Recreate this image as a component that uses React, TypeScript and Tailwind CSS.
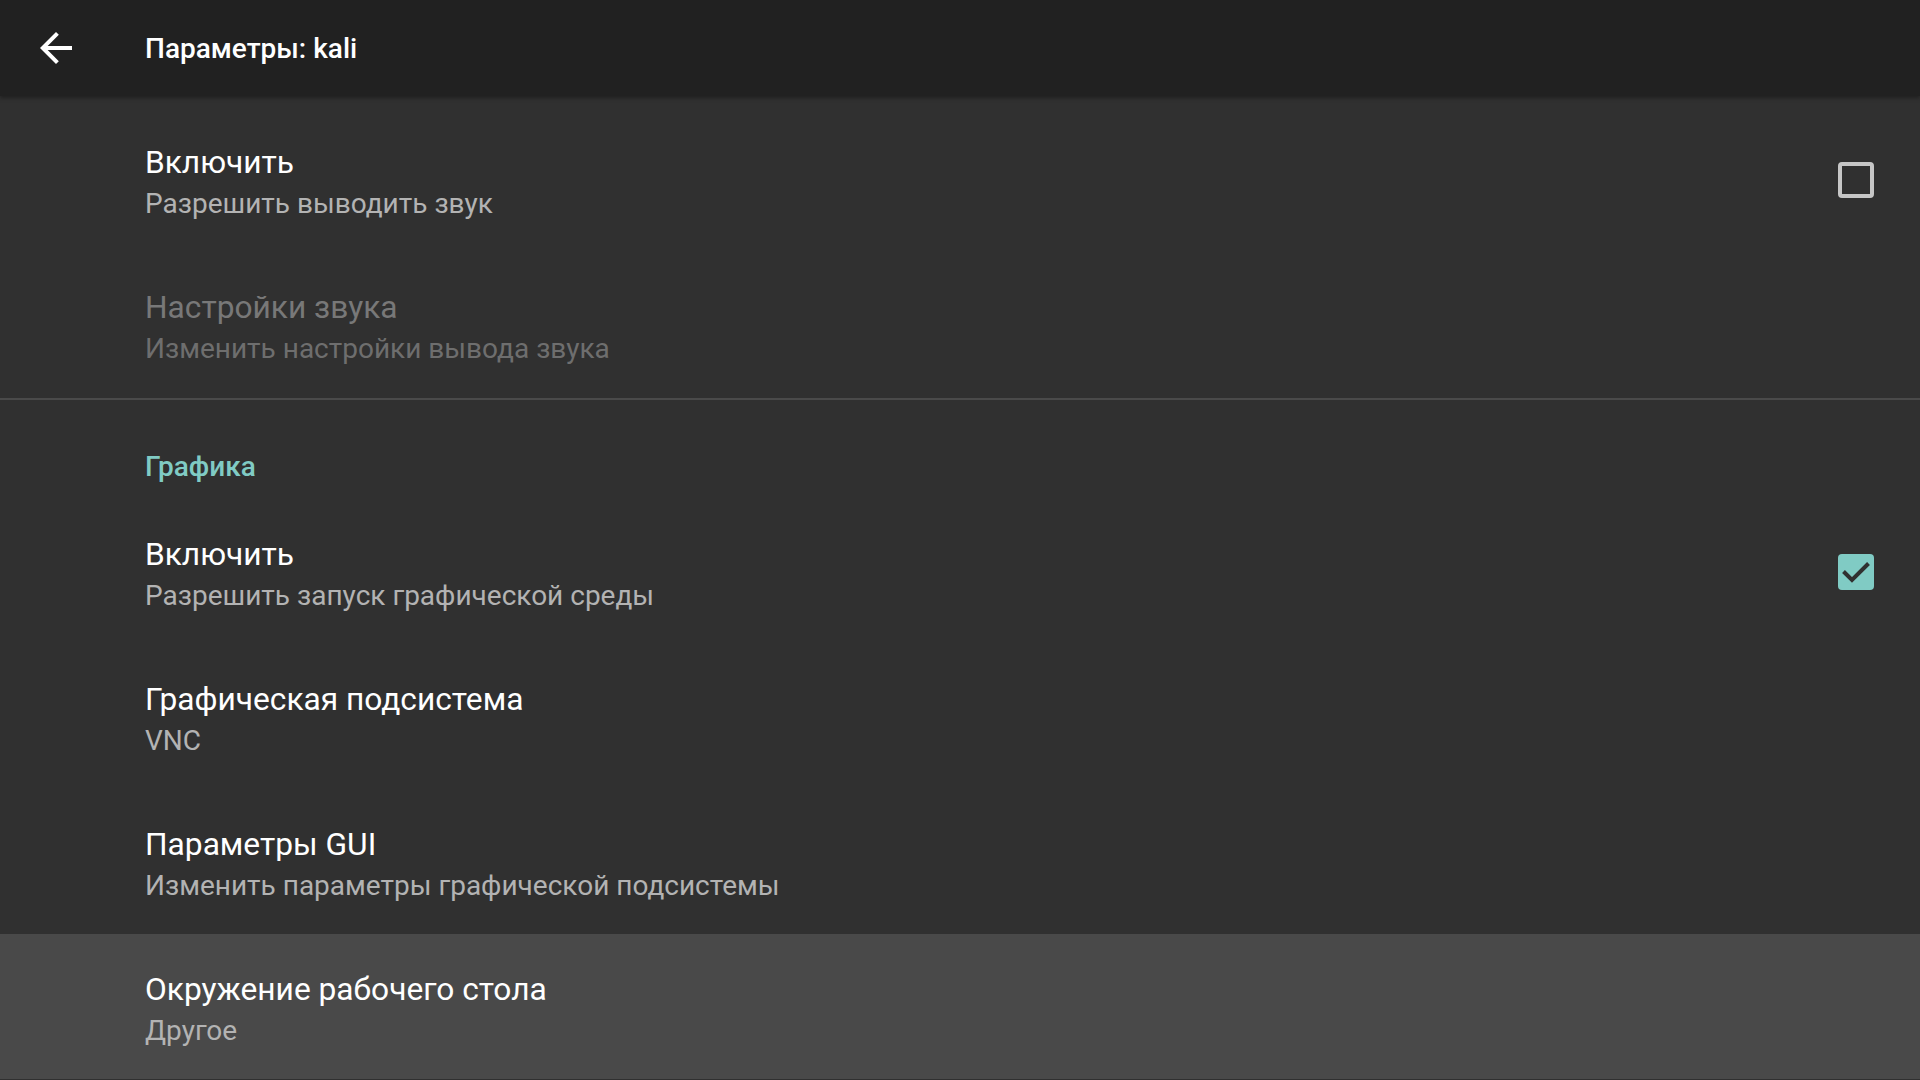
import React from "react";

type Pref = {
  title: string;
  summary: string;
  disabled?: boolean;
  checkbox?: "on" | "off";
  focused?: boolean;
};

function BackArrow() {
  return (
    <svg width="48" height="48" viewBox="0 0 24 24" fill="#ffffff">
      <path d="M20 11H7.83l5.59-5.59L12 4l-8 8 8 8 1.41-1.41L7.83 13H20v-2z" />
    </svg>
  );
}

function Checkbox({ checked }: { checked: boolean }) {
  if (checked) {
    return (
      <div className="w-[36px] h-[36px] rounded-[4px] bg-[#80cbc4] flex items-center justify-center">
        <svg width="36" height="36" viewBox="0 0 36 36" fill="none">
          <polyline
            points="5.5,17.5 14,26 30.5,9.5"
            stroke="#303030"
            strokeWidth="4"
            strokeLinecap="butt"
            strokeLinejoin="miter"
          />
        </svg>
      </div>
    );
  }
  return <div className="w-[36px] h-[36px] rounded-[4px] border-[4px] border-[#c6c6c6]" />;
}

function PrefRow({ p }: { p: Pref }) {
  return (
    <div
      className={`h-[145px] flex items-start pl-[145px] pr-[46px] ${
        p.focused ? "bg-[#494949]" : ""
      }`}
    >
      <div className="flex-1 pt-[36px]">
        <div
          className={`text-[31.7px] leading-[40px] ${
            p.disabled ? "text-[#787878]" : "text-white"
          }`}
        >
          {p.title}
        </div>
        <div
          className={`mt-[3px] text-[28px] leading-[36px] ${
            p.disabled ? "text-[#6e6e6e]" : "text-[#b3b3b3]"
          }`}
        >
          {p.summary}
        </div>
      </div>
      {p.checkbox && (
        <div className="h-full flex items-center">
          <Checkbox checked={p.checkbox === "on"} />
        </div>
      )}
    </div>
  );
}

const sound: Pref[] = [
  { title: "Включить", summary: "Разрешить выводить звук", checkbox: "off" },
  { title: "Настройки звука", summary: "Изменить настройки вывода звука", disabled: true },
];

const graphics: Pref[] = [
  { title: "Включить", summary: "Разрешить запуск графической среды", checkbox: "on" },
  { title: "Графическая подсистема", summary: "VNC" },
  { title: "Параметры GUI", summary: "Изменить параметры графической подсистемы" },
  { title: "Окружение рабочего стола", summary: "Другое", focused: true },
];

export default function App() {
  return (
    <div
      className="w-[1920px] h-[1080px] overflow-hidden bg-[#303030] flex flex-col"
      style={{ fontFamily: "Roboto, 'Noto Sans', sans-serif" }}
    >
      <header className="h-[96px] shrink-0 bg-[#212121] flex items-center shadow-[0_2px_4px_rgba(0,0,0,0.35)] relative z-10">
        <div className="ml-[32px] w-[48px] h-[48px] flex items-center justify-center">
          <BackArrow />
        </div>
        <div className="ml-[65px] pt-[2px] text-[28px] leading-[36px] font-medium text-white">
          Параметры: kali
        </div>
      </header>

      <div className="pt-[11px] flex flex-col">
        {sound.map((p, i) => (
          <PrefRow key={i} p={p} />
        ))}
      </div>

      <div className="h-[2px] bg-[#4a4a4a] mt-[1px]" />

      <div className="h-[99px] pl-[145px] pt-[49px]">
        <div className="text-[28px] leading-[36px] font-medium text-[#80cbc4]">Графика</div>
      </div>

      <div className="flex flex-col">
        {graphics.map((p, i) => (
          <PrefRow key={i} p={p} />
        ))}
      </div>
    </div>
  );
}
